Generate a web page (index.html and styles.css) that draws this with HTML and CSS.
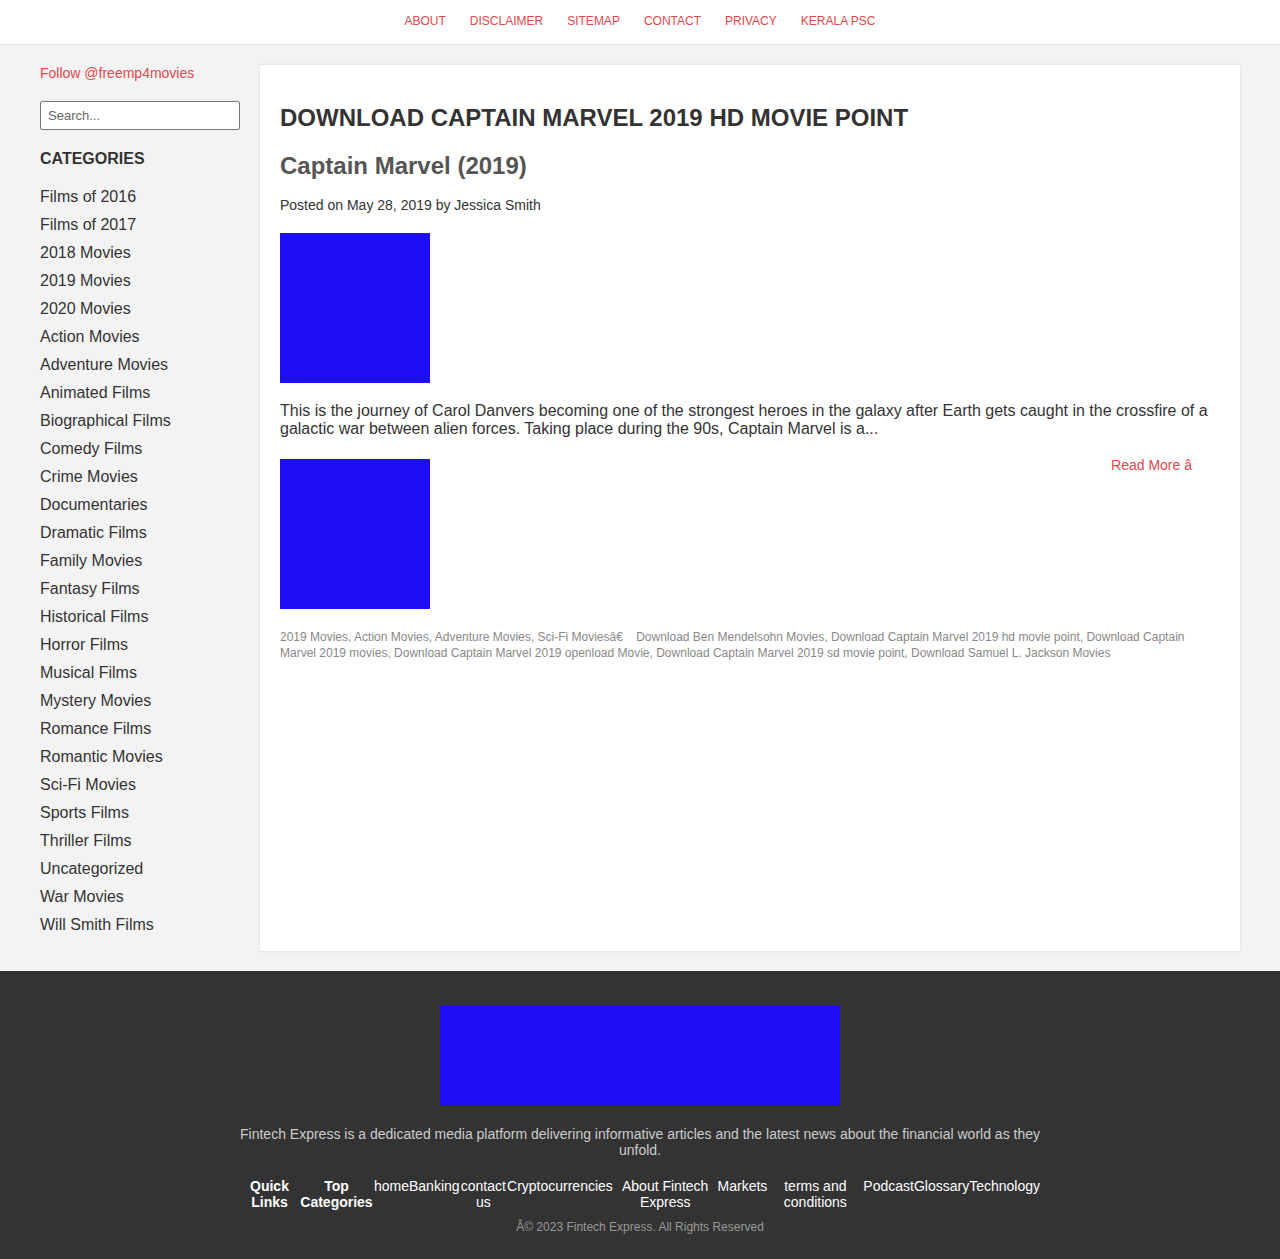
FILE: index.html
```html
<!DOCTYPE html>
<html>
<head>
<meta charset="utf-8">
<title>Download Captain Marvel 2019 HD Movie Point</title>
<link rel="stylesheet" href="styles.css">
</head>
<body>
<header class="topbar">
  <nav class="topnav">
    <a href="#">ABOUT</a>
    <a href="#">DISCLAIMER</a>
    <a href="#">SITEMAP</a>
    <a href="#">CONTACT</a>
    <a href="#">PRIVACY</a>
    <a href="#">KERALA PSC</a>
  </nav>
</header>

<div class="layout">
  <aside class="sidebar">
    <a class="follow" href="#">Follow @freemp4movies</a>
    <input class="search" type="text" placeholder="Search...">
    <h3 class="cat-title">CATEGORIES</h3>
    <ul class="cats">
      <li>Films of 2016</li>
      <li>Films of 2017</li>
      <li>2018 Movies</li>
      <li>2019 Movies</li>
      <li>2020 Movies</li>
      <li>Action Movies</li>
      <li>Adventure Movies</li>
      <li>Animated Films</li>
      <li>Biographical Films</li>
      <li>Comedy Films</li>
      <li>Crime Movies</li>
      <li>Documentaries</li>
      <li>Dramatic Films</li>
      <li>Family Movies</li>
      <li>Fantasy Films</li>
      <li>Historical Films</li>
      <li>Horror Films</li>
      <li>Musical Films</li>
      <li>Mystery Movies</li>
      <li>Romance Films</li>
      <li>Romantic Movies</li>
      <li>Sci-Fi Movies</li>
      <li>Sports Films</li>
      <li>Thriller Films</li>
      <li>Uncategorized</li>
      <li>War Movies</li>
      <li>Will Smith Films</li>
    </ul>
  </aside>

  <main class="card">
    <h1 class="page-title">DOWNLOAD CAPTAIN MARVEL 2019 HD MOVIE POINT</h1>
    <h2 class="post-title">Captain Marvel (2019)</h2>
    <div class="meta">Posted on May 28, 2019 by Jessica Smith</div>
    <div class="thumb"></div>
    <p class="excerpt">This is the journey of Carol Danvers becoming one of the strongest heroes in the galaxy after Earth gets caught in the crossfire of a galactic war between alien forces. Taking place during the 90s, Captain Marvel is a...</p>
    <div class="more-row">
      <div class="thumb"></div>
      <a class="read-more" href="#">Read More â</a>
    </div>
    <div class="tags">2019 Movies, Action Movies, Adventure Movies, Sci-Fi Moviesâ€&nbsp;&nbsp;&nbsp; Download Ben Mendelsohn Movies, Download Captain Marvel 2019 hd movie point, Download Captain Marvel 2019 movies, Download Captain Marvel 2019 openload Movie, Download Captain Marvel 2019 sd movie point, Download Samuel L. Jackson Movies</div>
  </main>
</div>

<footer class="footer">
  <div class="footer-logo"></div>
  <p class="footer-text">Fintech Express is a dedicated media platform delivering informative articles and the latest news about the financial world as they unfold.</p>
  <div class="footer-links">
    <span class="fl-head">Quick Links</span>
    <span class="fl-head">Top Categories</span>
    <a href="#">home</a>
    <a href="#">Banking</a>
    <a href="#">contact us</a>
    <a href="#">Cryptocurrencies</a>
    <a href="#">About Fintech Express</a>
    <a href="#">Markets</a>
    <a href="#">terms and conditions</a>
    <a href="#">Podcast</a>
    <a href="#">Glossary</a>
    <a href="#">Technology</a>
  </div>
  <div class="copyright">Â© 2023 Fintech Express. All Rights Reserved</div>
</footer>
</body>
</html>
```
FILE: styles.css
```css
* { box-sizing: border-box; }
html, body { margin: 0; padding: 0; }
body {
  font-family: "Liberation Sans", Arial, sans-serif;
  background: #f3f3f3;
  color: #333;
}
a { text-decoration: none; }

.topbar {
  background: #fff;
  height: 45px;
  border-bottom: 1px solid #e6e6e6;
  display: flex;
  align-items: center;
  justify-content: center;
}
.topnav {
  display: flex;
  gap: 24px;
  font-size: 12px;
  padding-bottom: 2px;
}
.topnav a { color: #e2474b; }

.layout {
  display: flex;
  gap: 20px;
  padding: 20px 40px;
  align-items: stretch;
}
.sidebar {
  width: 200px;
  flex: none;
  padding-bottom: 12px;
}
.follow {
  display: block;
  color: #e2474b;
  font-size: 14px;
  line-height: 16px;
}
.search {
  display: block;
  width: 200px;
  height: 29px;
  margin-top: 20px;
  border: 1px solid #777;
  border-radius: 2px;
  padding: 4px 7px;
  font-family: "Liberation Sans", Arial, sans-serif;
  font-size: 13px;
  background: #fff;
}
.search::placeholder { color: #666; }
.cat-title {
  font-size: 16px;
  font-weight: bold;
  margin: 20px 0 15px;
  line-height: 18px;
  color: #333;
}
.cats {
  list-style: none;
  margin: 0;
  padding: 0;
  font-size: 16px;
  line-height: 28px;
  color: #333;
}

.card {
  flex: 1;
  background: #fff;
  padding: 20px;
  box-shadow: 0 0 3px rgba(0,0,0,0.12);
}
.page-title {
  font-size: 24px;
  line-height: 27px;
  margin: 19px 0 0;
  color: #333;
}
.post-title {
  font-size: 24px;
  line-height: 28px;
  margin: 21px 0 0;
  color: #555;
}
.meta {
  font-size: 14px;
  line-height: 16px;
  margin-top: 17px;
  color: #333;
}
.thumb {
  width: 150px;
  height: 150px;
  background: #1e0ff6;
  flex: none;
}
.meta + .thumb { margin-top: 20px; }
.excerpt {
  font-size: 16px;
  line-height: 18px;
  margin: 19px 0 21px;
  color: #333;
}
.more-row {
  display: flex;
  justify-content: space-between;
  align-items: flex-start;
}
.read-more {
  color: #e2474b;
  font-size: 14px;
  line-height: 16px;
  margin-top: -2px;
  margin-right: 28px;
}
.tags {
  font-size: 12px;
  line-height: 16px;
  color: #888;
  margin-top: 20px;
}

.footer {
  margin-top: 0;
  background: #333;
  padding: 35px 0 26px;
  display: flex;
  flex-direction: column;
  align-items: center;
}
.footer-logo {
  width: 400px;
  height: 100px;
  background: #1e0ff6;
}
.footer-text {
  width: 800px;
  margin: 20px 0 0;
  text-align: center;
  color: #ccc;
  font-size: 14px;
  line-height: 16px;
}
.footer-links {
  width: 800px;
  display: flex;
  margin-top: 20px;
  font-size: 14px;
  line-height: 16px;
  text-align: center;
}
.footer-links a, .footer-links span {
  color: #fff;
}
.fl-head { font-weight: bold; }
.copyright {
  margin-top: 10px;
  font-size: 12px;
  line-height: 14px;
  color: #999;
}
```
